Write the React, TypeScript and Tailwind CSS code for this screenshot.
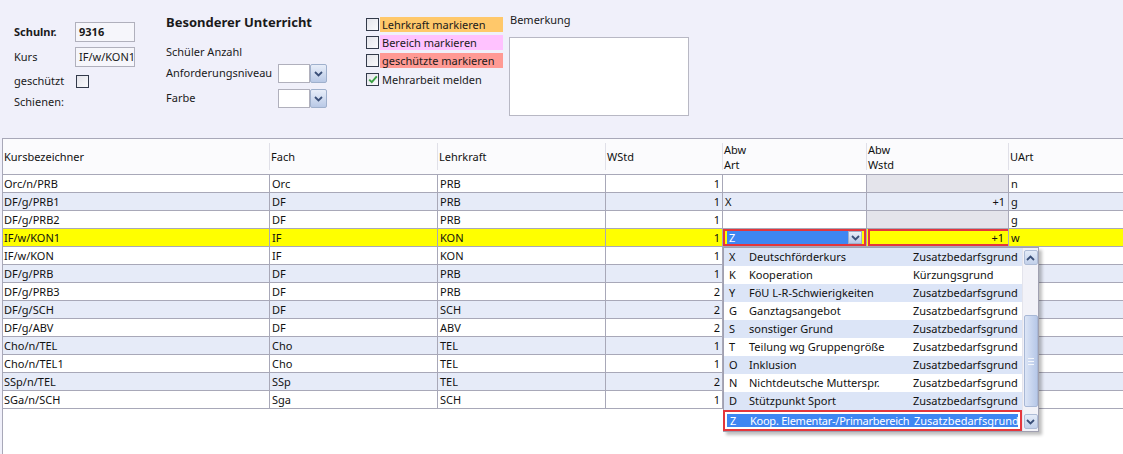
import React from "react";

type Row = {
  kurs: string;
  fach: string;
  lehrer: string;
  wstd: string;
  art: string;
  abw: string;
  uart: string;
  locked?: boolean;
};

const rows: Row[] = [
  { kurs: "Orc/n/PRB", fach: "Orc", lehrer: "PRB", wstd: "1", art: "", abw: "", uart: "n", locked: true },
  { kurs: "DF/g/PRB1", fach: "DF", lehrer: "PRB", wstd: "1", art: "X", abw: "+1", uart: "g" },
  { kurs: "DF/g/PRB2", fach: "DF", lehrer: "PRB", wstd: "1", art: "", abw: "", uart: "g", locked: true },
  { kurs: "IF/w/KON1", fach: "IF", lehrer: "KON", wstd: "1", art: "Z", abw: "+1", uart: "w" },
  { kurs: "IF/w/KON", fach: "IF", lehrer: "KON", wstd: "1", art: "", abw: "", uart: "" },
  { kurs: "DF/g/PRB", fach: "DF", lehrer: "PRB", wstd: "1", art: "", abw: "", uart: "" },
  { kurs: "DF/g/PRB3", fach: "DF", lehrer: "PRB", wstd: "2", art: "", abw: "", uart: "" },
  { kurs: "DF/g/SCH", fach: "DF", lehrer: "SCH", wstd: "2", art: "", abw: "", uart: "" },
  { kurs: "DF/g/ABV", fach: "DF", lehrer: "ABV", wstd: "2", art: "", abw: "", uart: "" },
  { kurs: "Cho/n/TEL", fach: "Cho", lehrer: "TEL", wstd: "1", art: "", abw: "", uart: "" },
  { kurs: "Cho/n/TEL1", fach: "Cho", lehrer: "TEL", wstd: "1", art: "", abw: "", uart: "" },
  { kurs: "SSp/n/TEL", fach: "SSp", lehrer: "TEL", wstd: "2", art: "", abw: "", uart: "" },
  { kurs: "SGa/n/SCH", fach: "Sga", lehrer: "SCH", wstd: "1", art: "", abw: "", uart: "" },
];

const options = [
  ["X", "Deutschförderkurs", "Zusatzbedarfsgrund"],
  ["K", "Kooperation", "Kürzungsgrund"],
  ["Y", "FöU L-R-Schwierigkeiten", "Zusatzbedarfsgrund"],
  ["G", "Ganztagsangebot", "Zusatzbedarfsgrund"],
  ["S", "sonstiger Grund", "Zusatzbedarfsgrund"],
  ["T", "Teilung wg Gruppengröße", "Zusatzbedarfsgrund"],
  ["O", "Inklusion", "Zusatzbedarfsgrund"],
  ["N", "Nichtdeutsche Mutterspr.", "Zusatzbedarfsgrund"],
  ["D", "Stützpunkt Sport", "Zusatzbedarfsgrund"],
];

function Chevron({ up = false }: { up?: boolean }) {
  return (
    <svg width="9" height="6" viewBox="0 0 9 6">
      <path
        d={up ? "M1 5 L4.5 1.5 L8 5" : "M1 1 L4.5 4.5 L8 1"}
        fill="none"
        stroke="#3a4f78"
        strokeWidth="1.8"
      />
    </svg>
  );
}

function ComboButton() {
  return (
    <div className="w-[17px] h-[19px] flex items-center justify-center border border-[#9fb0cc] bg-gradient-to-b from-[#e8eef9] to-[#b9c9e6] rounded-[2px]">
      <Chevron />
    </div>
  );
}

function Check({ checked = false }: { checked?: boolean }) {
  return (
    <div className="w-[13px] h-[13px] border border-[#333a4a] bg-gradient-to-br from-[#e4e4ea] to-[#fafafc] flex items-center justify-center shrink-0">
      {checked && (
        <svg width="10" height="9" viewBox="0 0 10 9">
          <path d="M1.2 4.6 L3.8 7.2 L8.8 1.4" fill="none" stroke="#3aa042" strokeWidth="1.9" />
        </svg>
      )}
    </div>
  );
}

function TopPanel() {
  return (
    <div className="h-[138px] flex text-[11px] text-[#1a1a1a]">
      {/* Kurs basics */}
      <div className="w-[166px] pl-[14px] pt-[22px] flex flex-col">
        <div className="flex items-center h-[20px]">
          <span className="w-[61px] font-bold">Schulnr.</span>
          <div className="w-[60px] h-[20px] border border-[#b0b0bc] bg-[#f6f6fb] px-[3px] font-bold leading-[18px]">9316</div>
        </div>
        <div className="flex items-center h-[20px] mt-[5px]">
          <span className="w-[61px]">Kurs</span>
          <div className="w-[60px] h-[20px] border border-[#b0b0bc] bg-[#f6f6fb] px-[3px] leading-[18px]">IF/w/KON1</div>
        </div>
        <div className="flex items-center h-[18px] mt-[5px]">
          <span className="w-[62px]">geschützt</span>
          <Check />
        </div>
        <div className="flex items-center h-[18px] mt-[3px]">
          <span>Schienen:</span>
        </div>
      </div>

      {/* Besonderer Unterricht */}
      <div className="w-[200px] pt-[13px] flex flex-col">
        <div className="text-[13px] font-bold leading-[18px]">Besonderer Unterricht</div>
        <div className="mt-[12px] h-[18px] leading-[18px]">Schüler Anzahl</div>
        <div className="flex items-center h-[19px] mt-[3px]">
          <span className="w-[112px]">Anforderungsniveau</span>
          <div className="w-[32px] h-[19px] border border-[#b0b0bc] bg-white" />
          <ComboButton />
        </div>
        <div className="flex items-center h-[19px] mt-[6px]">
          <span className="w-[112px]">Farbe</span>
          <div className="w-[32px] h-[19px] border border-[#b0b0bc] bg-white" />
          <ComboButton />
        </div>
      </div>

      {/* Markierungen */}
      <div className="w-[143px] pt-[17px] flex flex-col gap-[3px]">
        <div className="flex items-center h-[15px]">
          <Check />
          <span className="ml-[1px] w-[123px] h-[15px] leading-[15px] bg-[#ffc86a] pl-[2px]">Lehrkraft markieren</span>
        </div>
        <div className="flex items-center h-[15px]">
          <Check />
          <span className="ml-[1px] w-[123px] h-[15px] leading-[15px] bg-[#ffc2ff] pl-[2px]">Bereich markieren</span>
        </div>
        <div className="flex items-center h-[15px]">
          <Check />
          <span className="ml-[1px] w-[123px] h-[15px] leading-[15px] bg-[#ff9a94] pl-[2px] whitespace-nowrap">geschützte markieren</span>
        </div>
        <div className="flex items-center h-[15px] mt-[1px]">
          <Check checked />
          <span className="ml-[1px] pl-[2px] leading-[15px]">Mehrarbeit melden</span>
        </div>
      </div>

      {/* Bemerkung */}
      <div className="pt-[12px] flex flex-col">
        <div className="pl-[1px] h-[16px] leading-[16px]">Bemerkung</div>
        <div className="mt-[9px] w-[180px] h-[79px] border border-[#b8b8c4] bg-white" />
      </div>
    </div>
  );
}

const cols = "grid grid-cols-[266px_168px_168px_117px_144px_142px_1fr]";

function Table() {
  return (
    <div className="relative ml-[2px] border-l border-t border-[#a8a8b8] bg-white h-[316px] text-[11px] text-[#111]">
      {/* header */}
      <div className={`${cols} h-[36px] bg-[#fbfbfd] border-b border-[#a8a8b8]`}>
        <div className="flex items-center pl-[1px] pt-[2px]">Kursbezeichner</div>
        {["Fach", "Lehrkraft", "WStd"].map((t) => (
          <div key={t} className="flex items-center pl-[2px] pt-[2px] relative">
            <div className="absolute left-0 top-[4px] bottom-[4px] w-px bg-[#e0e0e8]" />
            {t}
          </div>
        ))}
        <div className="flex flex-col justify-center pl-[2px] leading-[15px] relative">
          <div className="absolute left-0 top-[4px] bottom-[4px] w-px bg-[#e0e0e8]" />
          <span>Abw</span>
          <span>Art</span>
        </div>
        <div className="flex flex-col justify-center pl-[2px] leading-[15px] relative">
          <div className="absolute left-0 top-[4px] bottom-[4px] w-px bg-[#e0e0e8]" />
          <span>Abw</span>
          <span>Wstd</span>
        </div>
        <div className="flex items-center pl-[2px] pt-[2px] relative">
          <div className="absolute left-0 top-[4px] bottom-[4px] w-px bg-[#e0e0e8]" />
          UArt
        </div>
      </div>

      {rows.map((r, i) => {
        const sel = i === 3;
        const bg = sel ? "bg-[#ffff00]" : i % 2 === 1 ? "bg-[#e6ebf8]" : "bg-white";
        const cell = "h-[18px] leading-[17px] border-b border-[#a8a8b8] whitespace-nowrap overflow-hidden";
        return (
          <div key={r.kurs} className={`${cols} ${bg}`}>
            <div className={`${cell} pl-[1px]`}>{r.kurs}</div>
            <div className={`${cell} border-l pl-[2px]`}>{r.fach}</div>
            <div className={`${cell} border-l pl-[2px]`}>{r.lehrer}</div>
            <div className={`${cell} border-l pr-[2px] text-right`}>{r.wstd}</div>
            {sel ? (
              <div className={`${cell} border-l`}>
                <div className="h-[17px] border-2 border-[#e4363c] flex items-center pl-[2px] pr-[2px]">
                  <div className="flex-1 h-[13px] bg-[#3e86f2] text-white leading-[13px] pl-[2px]">Z</div>
                  <div className="w-[14px] h-[13px] flex items-center justify-center bg-gradient-to-b from-[#e8eef9] to-[#b9c9e6] border border-[#9fb0cc]">
                    <Chevron />
                  </div>
                </div>
              </div>
            ) : (
              <div className={`${cell} border-l pl-[2px]`}>{r.art}</div>
            )}
            {sel ? (
              <div className={`${cell} border-l`}>
                <div className="h-[17px] border-2 border-[#e4363c] -mr-[3px] ml-[1px] pr-[5px] text-right leading-[13px] bg-[#ffff00]">
                  +1
                </div>
              </div>
            ) : (
              <div className={`${cell} border-l pr-[3px] text-right ${r.locked ? "bg-[#e4e4eb]" : ""}`}>{r.abw}</div>
            )}
            <div className={`${cell} border-l pl-[2px]`}>{r.uart}</div>
          </div>
        );
      })}

      {/* open dropdown list */}
      <div className="absolute left-[720px] top-[108px] w-[316px] h-[185px] border border-[#a0a0b0] bg-white flex shadow-[3px_3px_3px_rgba(0,0,0,0.25)]">
        <div className="flex-1 min-w-0 flex flex-col">
          {options.map(([c, n, k], i) => (
            <div
              key={c}
              className={`h-[18px] leading-[18px] flex whitespace-nowrap overflow-hidden ${i % 2 === 0 ? "bg-[#dce5f7]" : "bg-white"}`}
            >
              <span className="w-[25px] pl-[5px] shrink-0">{c}</span>
              <span className="w-[164px] shrink-0">{n}</span>
              <span>{k}</span>
            </div>
          ))}
          <div className="h-[21px] border-2 border-[#e4363c] -ml-px p-[2px] flex">
            <div className="flex-1 bg-[#3e86f2] text-white flex leading-[13px] whitespace-nowrap overflow-hidden">
              <span className="w-[23px] pl-[3px] shrink-0">Z</span>
              <span className="w-[164px] shrink-0 tracking-[-0.25px]">Koop. Elementar-/Primarbereich</span>
              <span>Zusatzbedarfsgrund</span>
            </div>
          </div>
        </div>
        {/* scrollbar */}
        <div className="w-[16px] shrink-0 flex flex-col items-center bg-[#f2f2f8] border-l border-[#e4e4ec] py-[2px]">
          <div className="w-[14px] h-[15px] flex items-center justify-center bg-gradient-to-b from-[#e4ebf8] to-[#c2d0ea] border border-[#aebcd6] rounded-[2px]">
            <Chevron up />
          </div>
          <div className="mt-[50px] w-[14px] h-[92px] bg-gradient-to-r from-[#dce5f6] via-[#c9d6ef] to-[#b7c8e8] border border-[#a8b8d6] rounded-[2px] flex flex-col items-center justify-center gap-[2px]">
            <div className="w-[6px] h-px bg-[#f4f7fc]" />
            <div className="w-[6px] h-px bg-[#f4f7fc]" />
            <div className="w-[6px] h-px bg-[#f4f7fc]" />
          </div>
          <div className="mt-auto w-[14px] h-[15px] flex items-center justify-center bg-gradient-to-b from-[#e4ebf8] to-[#c2d0ea] border border-[#aebcd6] rounded-[2px]">
            <Chevron />
          </div>
        </div>
      </div>
    </div>
  );
}

export default function App() {
  return (
    <div
      className="w-[1123px] h-[454px] overflow-hidden bg-[#f0f0fa]"
      style={{ fontFamily: '"Noto Sans", "Open Sans", sans-serif' }}
    >
      <TopPanel />
      <Table />
    </div>
  );
}
